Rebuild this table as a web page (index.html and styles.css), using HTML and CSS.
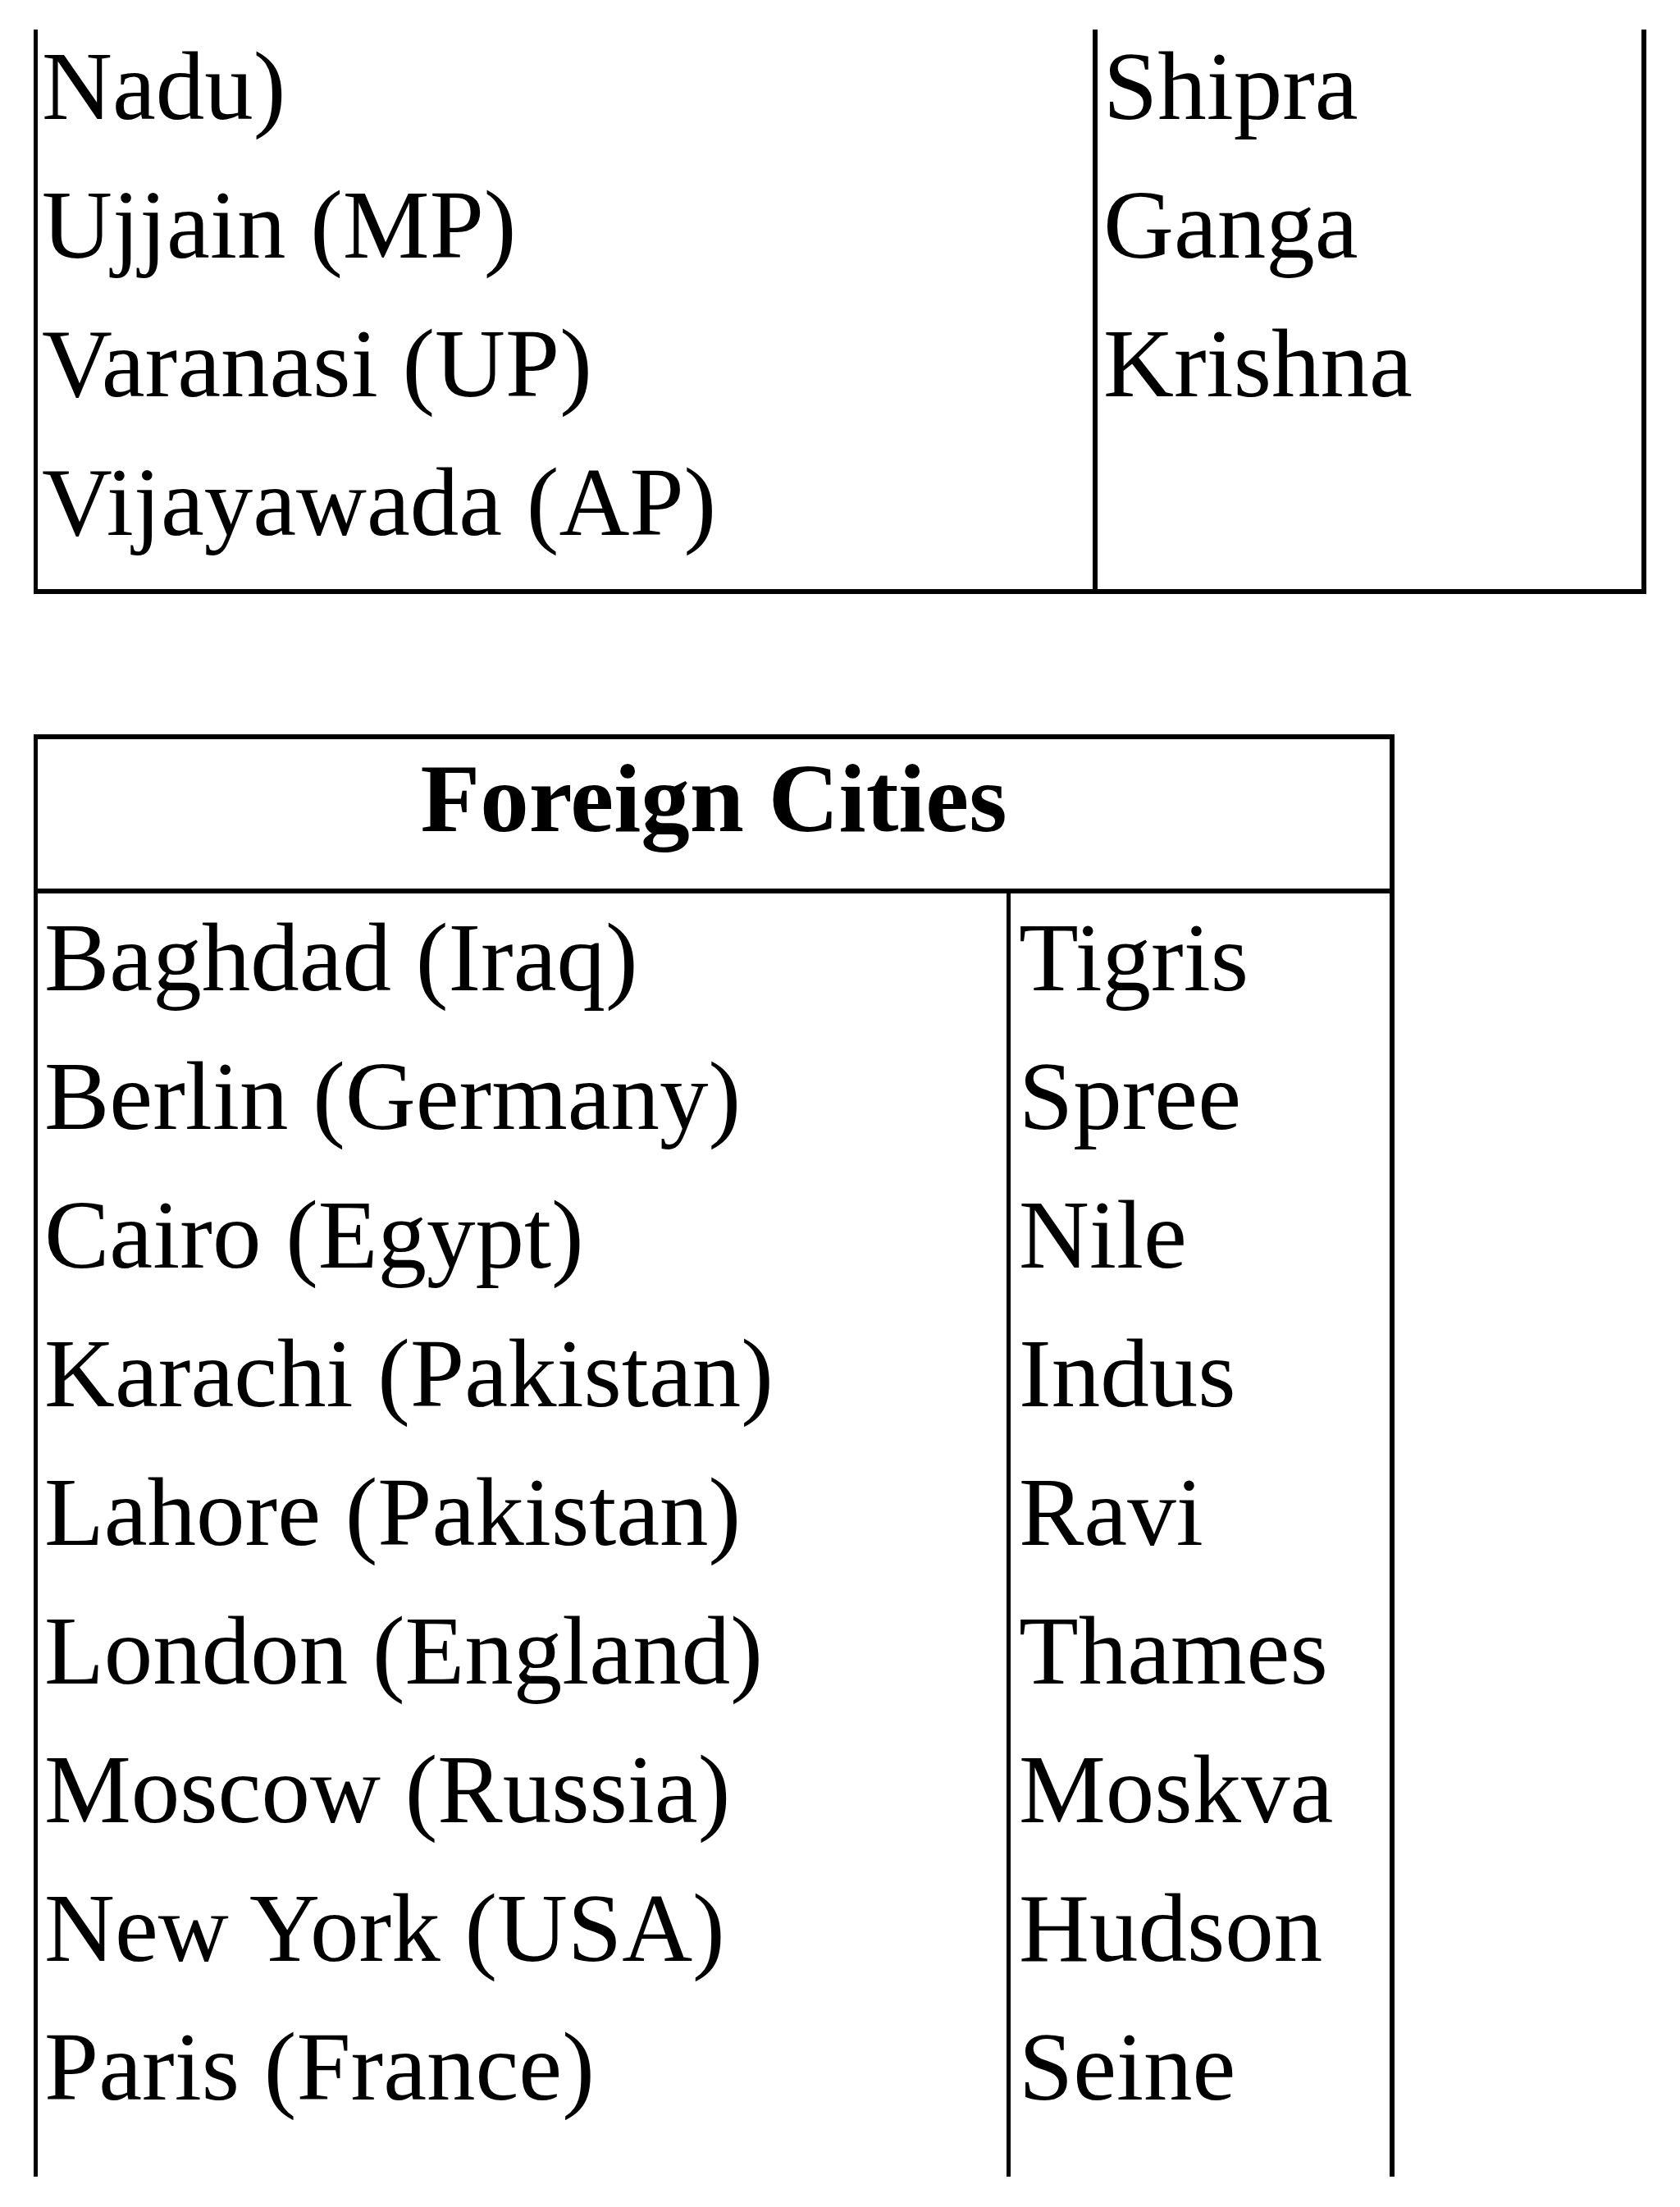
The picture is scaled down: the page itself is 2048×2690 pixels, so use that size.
FILE: index.html
```html
<!DOCTYPE html>
<html>
<head>
<meta charset="utf-8">
<link rel="stylesheet" href="styles.css">
</head>
<body>
<div class="page">
  <div class="table table-top">
    <div class="col col-left">
      <div class="row">Nadu)</div>
      <div class="row">Ujjain (MP)</div>
      <div class="row">Varanasi (UP)</div>
      <div class="row">Vijayawada (AP)</div>
    </div>
    <div class="col col-right">
      <div class="row">Shipra</div>
      <div class="row">Ganga</div>
      <div class="row">Krishna</div>
    </div>
  </div>

  <div class="table table-bottom">
    <div class="head">Foreign Cities</div>
    <div class="body">
      <div class="col col-left">
        <div class="row">Baghdad (Iraq)</div>
        <div class="row">Berlin (Germany)</div>
        <div class="row">Cairo (Egypt)</div>
        <div class="row">Karachi (Pakistan)</div>
        <div class="row">Lahore (Pakistan)</div>
        <div class="row">London (England)</div>
        <div class="row">Moscow (Russia)</div>
        <div class="row">New York (USA)</div>
        <div class="row">Paris (France)</div>
      </div>
      <div class="col col-right">
        <div class="row">Tigris</div>
        <div class="row">Spree</div>
        <div class="row">Nile</div>
        <div class="row">Indus</div>
        <div class="row">Ravi</div>
        <div class="row">Thames</div>
        <div class="row">Moskva</div>
        <div class="row">Hudson</div>
        <div class="row">Seine</div>
      </div>
    </div>
  </div>
</div>
</body>
</html>
```
FILE: styles.css
```css
* { box-sizing: border-box; }
html, body { margin: 0; padding: 0; background: #ffffff; }
body {
  font-family: "Liberation Serif", "Times New Roman", serif;
  font-size: 119px;
  color: #000000;
  width: 2048px;
  height: 2690px;
  overflow: hidden;
}
.page {
  padding-top: 36px;
  padding-left: 41px;
}
.table { border-left: 5px solid #000; border-right: 6px solid #000; }
.row { line-height: 126px; height: 126px; white-space: nowrap; }
.col { display: flex; flex-direction: column; gap: 43px; }

.table-top {
  width: 1966px;
  border-bottom: 6px solid #000;
  display: grid;
  grid-template-columns: 1292px 1fr;
}
.table-top .col { padding-top: 6px; padding-bottom: 43px; }
.table-top .col-left { border-right: 6px solid #000; padding-left: 5px; }
.table-top .col-right { padding-left: 7px; }

.table-bottom {
  margin-top: 171px;
  width: 1659px;
  border-top: 6px solid #000;
}
.head {
  font-weight: bold;
  text-align: center;
  line-height: 126px;
  height: 188px;
  padding-top: 9px;
  border-bottom: 6px solid #000;
}
.body {
  display: grid;
  grid-template-columns: 1186px 1fr;
}
.table-bottom .col { padding-top: 15px; padding-bottom: 71px; }
.table-bottom .col-left { border-right: 5px solid #000; padding-left: 8px; }
.table-bottom .col-right { padding-left: 10px; }
```
